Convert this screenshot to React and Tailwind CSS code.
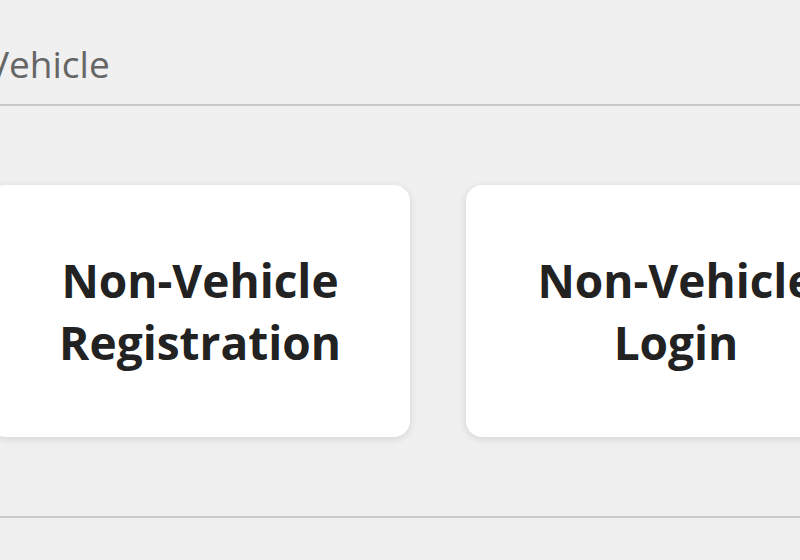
import React from "react";

const cards = [
  { top: "Non-Vehicle", bottom: "Registration" },
  { top: "Non-Vehicle", bottom: "Login" },
];

export default function App() {
  return (
    <div
      className="w-[800px] h-[560px] overflow-hidden bg-[#f0f0f0]"
      style={{ fontFamily: "'Open Sans', 'Noto Sans', sans-serif" }}
    >
      {/* Section title */}
      <div className="h-[106px] border-b-2 border-[#c9c9c9] flex items-end pb-[22px]">
        <span className="ml-[-13px] text-[37px] leading-none text-[#666666] whitespace-nowrap">
          Vehicle
        </span>
      </div>

      {/* Option cards */}
      <div className="flex gap-[56px] ml-[-10px] pt-[79px] pb-[79px] border-b-2 border-[#c9c9c9]">
        {cards.map((c) => (
          <div
            key={c.bottom}
            className="w-[420px] h-[252px] shrink-0 bg-white rounded-[16px] shadow-[0_2px_8px_rgba(0,0,0,0.12)] flex flex-col items-center justify-center text-[46px] leading-[62px] font-bold text-[#222222] whitespace-nowrap"
          >
            <span>{c.top}</span>
            <span>{c.bottom}</span>
          </div>
        ))}
      </div>
    </div>
  );
}
